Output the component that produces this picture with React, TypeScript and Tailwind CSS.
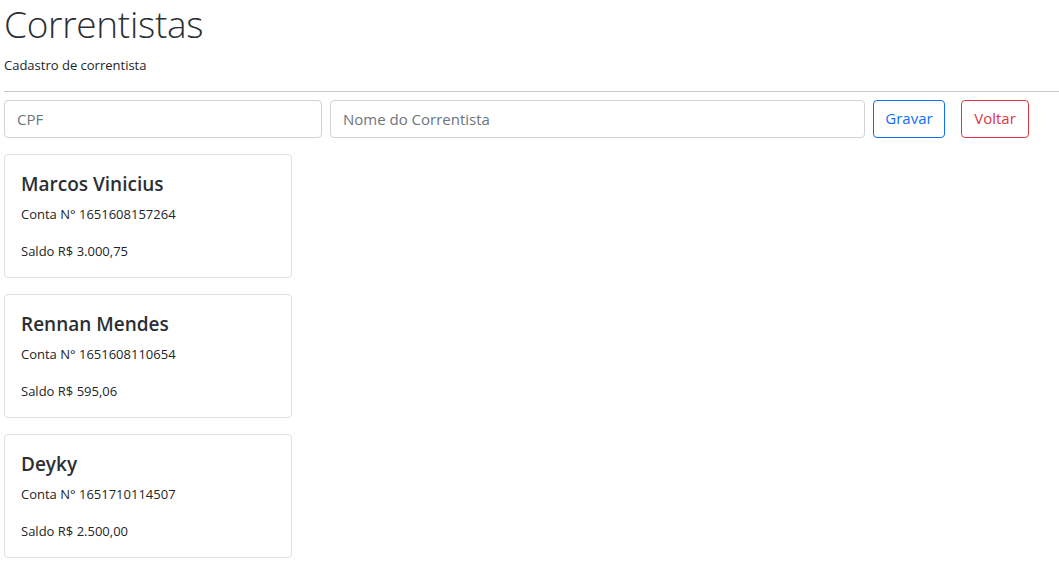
import React from 'react'

interface Correntista { nome: string; conta: string; saldo: string }

const correntistas: Correntista[] = [
  { nome: 'Marcos Vinicius', conta: '1651608157264', saldo: '3.000,75' },
  { nome: 'Rennan Mendes', conta: '1651608110654', saldo: '595,06' },
  { nome: 'Deyky', conta: '1651710114507', saldo: '2.500,00' },
]

export default function App() {
  return (
    <div className="min-h-screen bg-white px-[4px] text-[#212529]" style={{ fontFamily: '"Open Sans", sans-serif' }}>
      <h1 className="text-[37px] font-light leading-[48px] tracking-[-0.3px] text-[#2b2f33]">Correntistas</h1>
      <p className="text-[13px] mt-[8px]">Cadastro de correntista</p>
      <hr className="mt-[15px] -mr-[4px] border-t border-[#c8c8c8]" />
      <div className="flex mt-[8px] w-[1025px]">
        <input placeholder="CPF"
          className="h-[38px] w-[318px] rounded border border-[#ced4da] px-3 text-[15px] placeholder:text-[#6c757d] outline-none" />
        <input placeholder="Nome do Correntista"
          className="ml-2 h-[38px] w-[535px] rounded border border-[#ced4da] px-3 text-[15px] placeholder:text-[#6c757d] outline-none" />
        <button className="ml-2 h-[38px] w-[72px] rounded border border-[#0d6efd] text-[15px] text-[#0d6efd]">Gravar</button>
        <button className="ml-4 h-[38px] w-[68px] rounded border border-[#dc3545] text-[15px] text-[#dc3545]">Voltar</button>
      </div>
      <div className="flex flex-col gap-4 mt-4 pb-4">
        {correntistas.map(c => (
          <div key={c.conta} className="w-[288px] rounded border border-[#dfdfdf] px-4 pt-4 pb-[15px]">
            <h5 className="text-[19px] font-semibold leading-6 pt-[1px] text-[#2b2f33]">{c.nome}</h5>
            <p className="text-[13px] leading-[21px] mt-[8px]">Conta N° {c.conta}</p>
            <p className="text-[13px] leading-[21px] mt-4">Saldo R$ {c.saldo}</p>
          </div>
        ))}
      </div>
    </div>
  )
}
